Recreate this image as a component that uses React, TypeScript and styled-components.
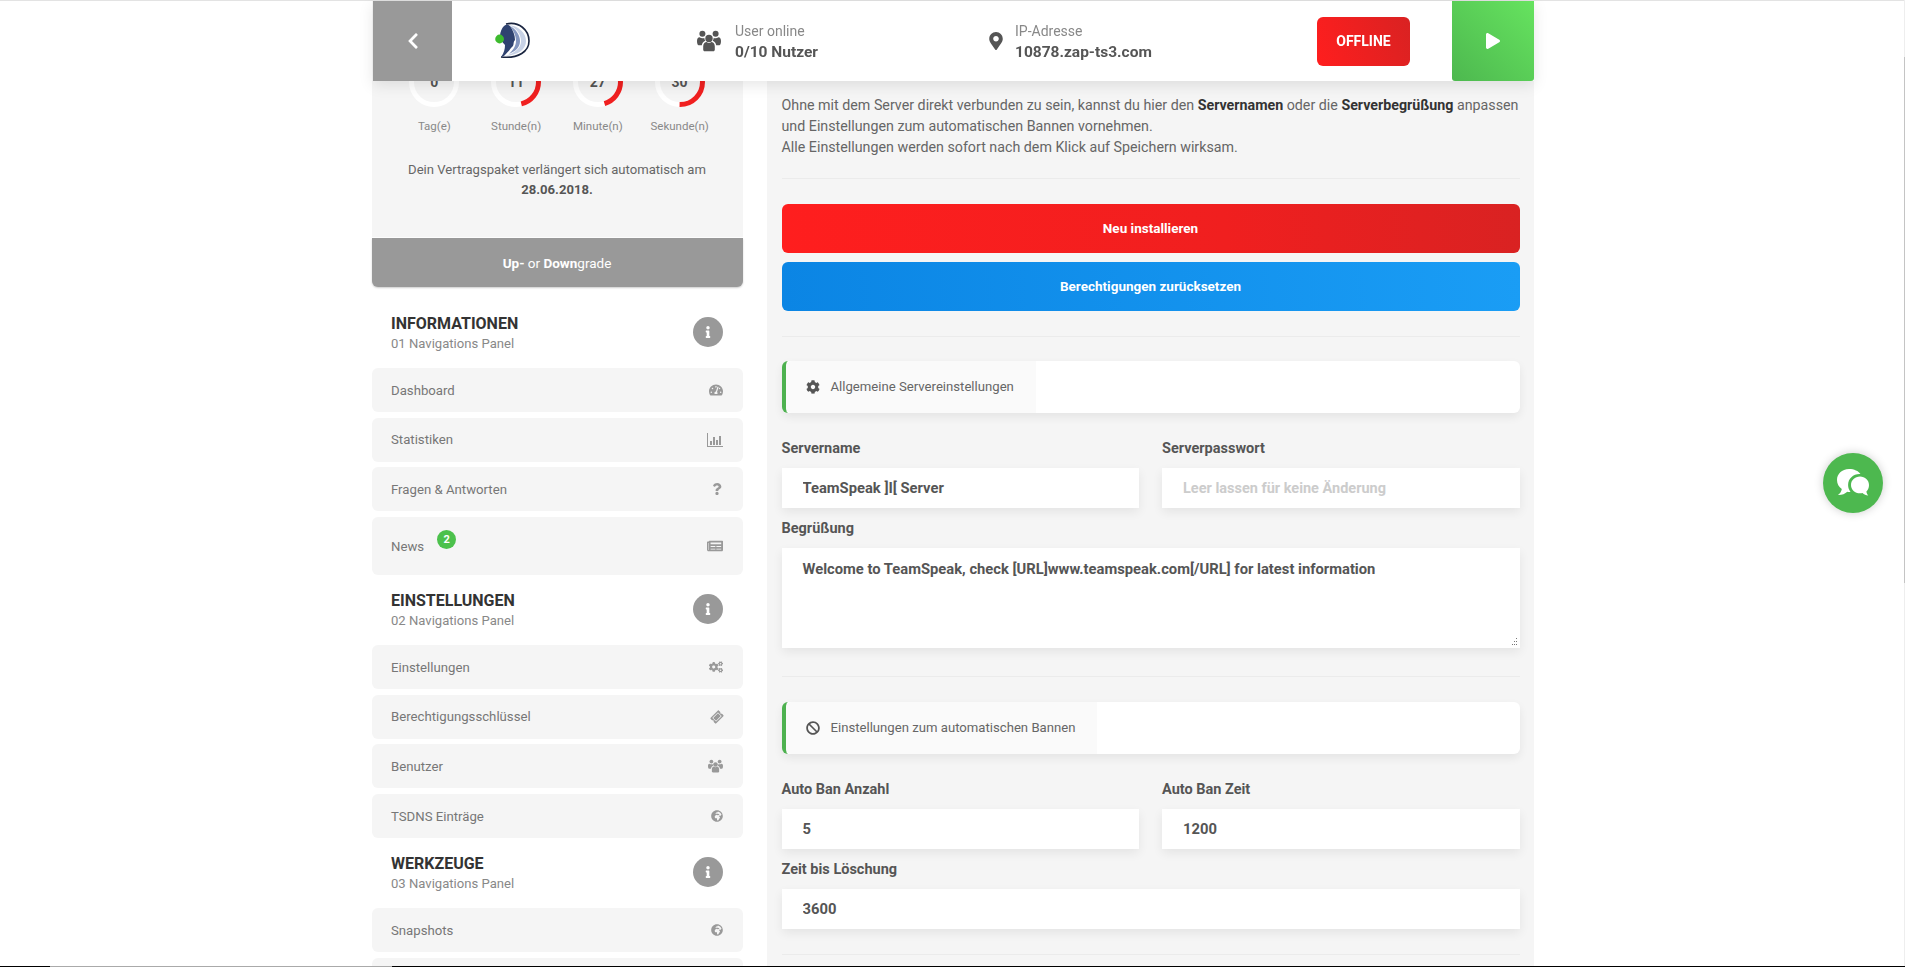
import styled, { createGlobalStyle } from "styled-components"
import type { ReactNode } from "react"
import {
	FaBan,
	FaChevronLeft,
	FaCog,
	FaCogs,
	FaGlobeAfrica,
	FaInfo,
	FaMapMarkerAlt,
	FaNewspaper,
	FaPlay,
	FaQuestion,
	FaTachometerAlt,
	FaTicketAlt,
} from "react-icons/fa"

const FONT = `Roboto, "Noto Sans", sans-serif`

const GlobalStyle = createGlobalStyle`
	html, body {
		margin: 0;
		height: 100%;
		overflow: hidden;
		background: #fff;
	}
	body {
		font-family: ${FONT};
		color: #666;
	}
	* {
		box-sizing: border-box;
	}
`

const s = {
	Page: styled.div`
		display: flex;
		justify-content: center;
		gap: 24px;
		height: 967px;
		overflow: hidden;
	`,

	Header: styled.header`
		position: fixed;
		top: 1px;
		left: 373px;
		width: 1161px;
		height: 80px;
		z-index: 5;
		display: flex;
		align-items: center;
		background: #fff;
		box-shadow: 0 4px 14px rgba(0, 0, 0, 0.1);
	`,
	BackButton: styled.button`
		flex: 0 0 79px;
		height: 100%;
		border: 0;
		padding: 0;
		display: flex;
		align-items: center;
		justify-content: center;
		color: #fff;
		font-size: 18px;
		background: #999;
	`,
	Brand: styled.div`
		flex: 0 0 245px;
		padding-left: 43px;
		display: flex;
		align-items: center;
	`,
	Stat: styled.div<{ $width: number; $gap: number }>`
		flex: 0 0 ${(p) => p.$width}px;
		display: flex;
		align-items: center;
		gap: ${(p) => p.$gap}px;
		> svg {
			color: #555;
			font-size: 18px;
		}
	`,
	StatText: styled.div`
		display: flex;
		flex-direction: column;
		gap: 1px;
	`,
	StatLabel: styled.span`
		font-size: 14px;
		line-height: 20px;
		color: #888;
	`,
	StatValue: styled.span`
		font-size: 15.5px;
		line-height: 20px;
		font-weight: 700;
		color: #555;
	`,
	OfflineButton: styled.button`
		flex: 0 0 93px;
		height: 49px;
		margin-right: 42px;
		border: 0;
		border-radius: 6px;
		font-family: ${FONT};
		font-size: 14px;
		font-weight: 700;
		color: #fff;
		background: linear-gradient(70deg, #ff1e1e, #d92222);
	`,
	PlayButton: styled.button`
		flex: 0 0 82px;
		height: 100%;
		border: 0;
		border-radius: 0 0 3px 3px;
		display: flex;
		align-items: center;
		justify-content: center;
		color: #fff;
		font-size: 16px;
		background: linear-gradient(45deg, #4db84f, #66e35f);
	`,

	Sidebar: styled.aside`
		flex: 0 0 371px;
	`,
	UsageCard: styled.section`
		background: #f5f5f5;
		padding: 57px 22px 37px;
		text-align: center;
	`,
	GaugeRow: styled.div`
		display: grid;
		grid-template-columns: repeat(4, 1fr);
	`,
	Gauge: styled.div`
		display: flex;
		flex-direction: column;
		align-items: center;
		gap: 11px;
	`,
	GaugeDial: styled.div`
		width: 50px;
		height: 50px;
		display: grid;
		place-items: center;
		> * {
			grid-area: 1 / 1;
		}
	`,
	GaugeNumber: styled.span`
		font-size: 14px;
		font-weight: 700;
		color: #555;
	`,
	GaugeLabel: styled.span`
		font-size: 11.5px;
		line-height: 16px;
		color: #888;
	`,
	RenewText: styled.p`
		margin: 26px 0 0;
		font-size: 13.1px;
		line-height: 20px;
		color: #666;
		strong {
			color: #555;
		}
	`,
	UpgradeButton: styled.button`
		display: block;
		width: 100%;
		height: 49px;
		margin-top: 1px;
		border: 0;
		border-radius: 0 0 6px 6px;
		font-family: ${FONT};
		font-size: 13.5px;
		color: #fff;
		background: #999;
		box-shadow: 0 1px 2px rgba(0, 0, 0, 0.2);
	`,

	NavGroup: styled.nav`
		display: flex;
		flex-direction: column;
		gap: 5.6px;
		&:first-of-type {
			margin-top: 11px;
		}
	`,
	NavHead: styled.div`
		height: 70px;
		margin-bottom: -5.6px;
		padding: 2px 20px 0 19.5px;
		display: flex;
		align-items: center;
		justify-content: space-between;
	`,
	NavTitle: styled.h3`
		margin: 0;
		font-size: 16px;
		line-height: 20px;
		font-weight: 700;
		color: #333;
	`,
	NavSub: styled.div`
		font-size: 13.1px;
		line-height: 20px;
		color: #888;
	`,
	InfoDot: styled.span`
		width: 30px;
		height: 30px;
		margin-top: -4px;
		border-radius: 50%;
		display: flex;
		align-items: center;
		justify-content: center;
		color: #fff;
		font-size: 12px;
		background: #999;
	`,
	NavRow: styled.a<{ $tall?: boolean }>`
		height: ${(p) => (p.$tall ? 58.5 : 44)}px;
		padding: 0 20px 0 19.5px;
		display: flex;
		flex-shrink: 0;
		align-items: center;
		justify-content: space-between;
		border-radius: 6px;
		font-size: 13.2px;
		color: #777;
		background: #f5f5f5;
	`,
	NavLabel: styled.span`
		position: relative;
	`,
	Badge: styled.span`
		position: absolute;
		top: -9px;
		left: calc(100% + 13px);
		width: 19px;
		height: 19px;
		border-radius: 50%;
		display: flex;
		align-items: center;
		justify-content: center;
		font-size: 11px;
		font-weight: 700;
		color: #fff;
		background: #4cc14c;
	`,
	NavIcon: styled.span<{ $turn?: boolean }>`
		display: flex;
		font-size: 14px;
		color: #999;
		transform: ${(p) => (p.$turn ? "rotate(-45deg)" : "none")};
	`,

	Panel: styled.main`
		flex: 0 0 767px;
		padding: 95px 14px 0 15px;
		background: #f5f5f5;
	`,
	Intro: styled.p`
		margin: 0;
		font-size: 14.25px;
		line-height: 21px;
		color: #666;
		strong {
			color: #333;
		}
	`,
	Rule: styled.hr<{ $top: number; $bottom?: number }>`
		margin: ${(p) => p.$top}px 0 ${(p) => p.$bottom ?? 25}px;
		height: 1px;
		border: 0;
		background: #ebebeb;
	`,
	WideButton: styled.button<{ $tone: "red" | "blue" }>`
		display: block;
		width: 100%;
		height: 48.5px;
		border: 0;
		border-radius: 6px;
		font-family: ${FONT};
		font-size: 13.5px;
		font-weight: 700;
		color: #fff;
		background: ${(p) =>
			p.$tone === "red"
				? "linear-gradient(85deg, #ff1e1e, #f01f1f 60%, #d92222)"
				: "linear-gradient(85deg, #0b85e4, #1a9df5)"};
		& + & {
			margin-top: 9.5px;
		}
	`,
	SectionBar: styled.div`
		height: 52px;
		display: flex;
		border-left: 4px solid #4db14f;
		border-radius: 6px;
		background: #fff;
		box-shadow: 0 4px 10px rgba(0, 0, 0, 0.07);
	`,
	SectionTag: styled.div`
		display: flex;
		align-items: center;
		gap: 11px;
		padding: 0 22px 0 20px;
		border-radius: 6px 0 0 6px;
		font-size: 13.15px;
		color: #666;
		background: #fafafa;
		svg {
			color: #555;
			font-size: 14px;
		}
	`,
	FieldGrid: styled.div`
		display: grid;
		grid-template-columns: 1fr 1fr;
		column-gap: 23px;
		row-gap: 11px;
		margin-top: 26px;
	`,
	Field: styled.label<{ $wide?: boolean }>`
		display: flex;
		flex-direction: column;
		gap: 9px;
		grid-column: ${(p) => (p.$wide ? "1 / -1" : "auto")};
		position: relative;
	`,
	FieldLabel: styled.span`
		font-size: 14.5px;
		line-height: 20px;
		font-weight: 700;
		color: #555;
	`,
	Input: styled.input`
		width: 100%;
		height: 40px;
		padding: 1px 21px 0;
		border: 0;
		outline: 0;
		font-family: ${FONT};
		font-size: 14.75px;
		font-weight: 700;
		color: #555;
		background: #fff;
		box-shadow: 0 4px 10px rgba(0, 0, 0, 0.07);
		&::placeholder {
			color: #ccc;
			opacity: 1;
			font-size: 14.5px;
		}
	`,
	TextArea: styled.textarea`
		display: block;
		width: 100%;
		height: 100px;
		padding: 11px 21px;
		border: 0;
		outline: 0;
		resize: none;
		font-family: ${FONT};
		font-size: 14.75px;
		line-height: 20px;
		font-weight: 700;
		color: #555;
		background: #fff;
		box-shadow: 0 4px 10px rgba(0, 0, 0, 0.07);
	`,
	Grip: styled.svg`
		position: absolute;
		right: 2px;
		bottom: 2px;
		width: 8px;
		height: 8px;
	`,

	ChatButton: styled.button`
		position: fixed;
		top: 453px;
		left: 1823px;
		width: 60px;
		height: 60px;
		padding: 0;
		border: 0;
		border-radius: 50%;
		display: flex;
		align-items: center;
		justify-content: center;
		background: #4db84f;
		box-shadow: 0 0 10px rgba(0, 0, 0, 0.2);
	`,

	// the browser's thin scrollbars are part of the picture
	TopEdge: styled.div`
		position: fixed;
		top: 0;
		left: 0;
		right: 0;
		height: 1px;
		background: #e3e3e3;
	`,
	ScrollY: styled.div`
		position: fixed;
		top: 0;
		bottom: 0;
		right: 0;
		width: 1px;
		background: #eee;
		&::after {
			content: "";
			position: absolute;
			top: 57px;
			left: 0;
			width: 1px;
			height: 526px;
			background: #c4c4c4;
		}
	`,
	ScrollX: styled.div`
		position: fixed;
		left: 0;
		right: 0;
		bottom: 0;
		height: 1px;
		z-index: 6;
		background: #000;
		&::after {
			content: "";
			position: absolute;
			top: 0;
			left: 50px;
			width: 342px;
			height: 1px;
			background: #aaa;
		}
	`,
}

const gauges = [
	{ value: 0, max: 24, label: "Tag(e)" },
	{ value: 11, max: 24, label: "Stunde(n)" },
	{ value: 27, max: 60, label: "Minute(n)" },
	{ value: 30, max: 60, label: "Sekunde(n)" },
]

type NavItem = { label: string; icon?: ReactNode; badge?: number; turn?: boolean }

const BarChartIcon = () => (
	<svg width="16" height="14" viewBox="0 0 16 14" fill="currentColor">
		<path d="M0 0h1v13h15v1H0z" />
		<path d="M3 8h2v4H3zM6 4h2v8H6zM9 7h2v5H9zM12 3h2v9h-2z" />
	</svg>
)

// three heads, the middle one lower and in front
const UsersIcon = ({ width, height }: { width: number; height: number }) => (
	<svg width={width} height={height} viewBox="0 0 24 21" fill="currentColor">
		<circle cx="12" cy="8" r="3.7" />
		<path d="M6.200 19.300v-3.600c0-2.600 1.800-4.200 3.600-4.200.6.600 1.300.9 2.200.9s1.600-.3 2.200-.9c1.800 0 3.600 1.600 3.600 4.200v3.600c0 .9-.7 1.500-1.500 1.500H7.700c-.8 0-1.500-.6-1.500-1.500z" />
		<circle cx="5.400" cy="3.300" r="3" />
		<circle cx="18.600" cy="3.300" r="3" />
		<path d="M0 10.500C0 8.200 1 6.800 2.600 6.800c.8.600 1.800 1 2.900 1 .7 0 1.300-.1 1.900-.4-.1.700.2 2 .9 2.800-1.900.7-3.200 2.300-3.500 4.600H1.700C.6 14.800 0 13 0 10.500z" />
		<path d="M24 10.500c0-2.300-1-3.700-2.600-3.700-.8.600-1.800 1-2.900 1-.7 0-1.300-.1-1.900-.4.100.7-.2 2-.9 2.800 1.900.7 3.200 2.300 3.500 4.600h3.100c1.100 0 1.700-1.800 1.700-4.300z" />
	</svg>
)

const navGroups: { title: string; sub: string; items: NavItem[] }[] = [
	{
		title: "INFORMATIONEN",
		sub: "01 Navigations Panel",
		items: [
			{ label: "Dashboard", icon: <FaTachometerAlt /> },
			{ label: "Statistiken", icon: <BarChartIcon /> },
			{ label: "Fragen & Antworten", icon: <FaQuestion size={12} /> },
			{ label: "News", icon: <FaNewspaper size={16} />, badge: 2 },
		],
	},
	{
		title: "EINSTELLUNGEN",
		sub: "02 Navigations Panel",
		items: [
			{ label: "Einstellungen", icon: <FaCogs /> },
			{ label: "Berechtigungsschlüssel", icon: <FaTicketAlt size={12} />, turn: true },
			{ label: "Benutzer", icon: <UsersIcon width={15} height={14} /> },
			{ label: "TSDNS Einträge", icon: <FaGlobeAfrica size={12} /> },
		],
	},
	{
		title: "WERKZEUGE",
		sub: "03 Navigations Panel",
		items: [
			{ label: "Snapshots", icon: <FaGlobeAfrica size={12} /> },
			{ label: "" }, // only the top of this row is on screen
		],
	},
]

function GaugeRing({ value, max }: { value: number; max: number }) {
	const radius = 22.5
	const length = 2 * Math.PI * radius
	return (
		<svg width="50" height="50" viewBox="0 0 50 50">
			<circle cx="25" cy="25" r={radius} fill="none" stroke="#fff" strokeWidth="5" />
			<circle
				cx="25"
				cy="25"
				r={radius}
				fill="none"
				stroke="#f02020"
				strokeWidth="5"
				strokeDasharray={`${(value / max) * length} ${length}`}
				transform="rotate(-90 25 25)"
			/>
		</svg>
	)
}

function TeamSpeakLogo() {
	return (
		<svg width="36" height="38" viewBox="0 0 36 38">
			<path d="M11 2C24-1 34 8 34 19c0 10-10 18-28 16" fill="none" stroke="#1a2540" strokeWidth="1.600" />
			<path d="M14 3c10 1 17 8 17 16s-7 14-21 15c10-3 16-8 16-15S21 6 14 3z" fill="#c8d2e6" />
			<path d="M15 4c6 3 10 9 10 15s-4 10-11 13c4-4 7-8 7-13 0-6-3-11-6-15z" fill="#8496bf" />
			<path d="M9 4c2-2 4-2 6 0 3 4 5 9 5 14-2 2-1 4-2 6-3 3-4 5-8 9-1 1-3 2-4 2 3-4 4-8 4-12-3-3-5-6-5-9 0-4 2-8 4-10z" fill="#2f4270" />
			<circle cx="4.600" cy="17" r="4.400" fill="#3dbb2e" />
		</svg>
	)
}

function ChatIcon() {
	return (
		<svg width="36" height="30" viewBox="0 0 36 30" fill="#fff">
			<path d="M14 1C6.800 1 2 6 2 12c0 3.800 1.900 6.900 4.800 9C6.400 23.500 5 25.700 3 27c3.500.2 7-1 9.300-3.200.6.100 1.200.2 1.700.2.500 0 1-.100 1.500-.100-1.500-2-2.400-4.300-2.400-6.900C13.100 10.700 18.100 6 24.500 6c.4 0 .7 0 1 .1C23.500 3 19.200 1 14 1z" />
			<path d="M25 8.500c-5 0-9 3.700-9 8.400 0 4.600 4 8.300 9 8.300.9 0 1.700-.1 2.500-.3 1.500 1.400 3.500 2.300 5.800 2.500-1-1-1.700-2.400-1.900-4 1.600-1.500 2.600-3.600 2.600-6.500 0-4.700-4-8.400-9-8.400z" />
		</svg>
	)
}

export default function App() {
	return (
		<>
			<GlobalStyle />
			<s.TopEdge />
			<s.Header>
				<s.BackButton><FaChevronLeft /></s.BackButton>
				<s.Brand><TeamSpeakLogo /></s.Brand>
				<s.Stat $width={290} $gap={14}>
					<UsersIcon width={24} height={22} />
					<s.StatText>
						<s.StatLabel>User online</s.StatLabel>
						<s.StatValue>0/10 Nutzer</s.StatValue>
					</s.StatText>
				</s.Stat>
				<s.Stat $width={330} $gap={10}>
					<FaMapMarkerAlt />
					<s.StatText>
						<s.StatLabel>IP-Adresse</s.StatLabel>
						<s.StatValue>10878.zap-ts3.com</s.StatValue>
					</s.StatText>
				</s.Stat>
				<s.OfflineButton>OFFLINE</s.OfflineButton>
				<s.PlayButton><FaPlay /></s.PlayButton>
			</s.Header>

			<s.Page>
				<s.Sidebar>
					<s.UsageCard>
						<s.GaugeRow>
							{gauges.map((g) => (
								<s.Gauge key={g.label}>
									<s.GaugeDial>
										<GaugeRing value={g.value} max={g.max} />
										<s.GaugeNumber>{g.value}</s.GaugeNumber>
									</s.GaugeDial>
									<s.GaugeLabel>{g.label}</s.GaugeLabel>
								</s.Gauge>
							))}
						</s.GaugeRow>
						<s.RenewText>
							Dein Vertragspaket verlängert sich automatisch am
							<br />
							<strong>28.06.2018.</strong>
						</s.RenewText>
					</s.UsageCard>
					<s.UpgradeButton>
						<strong>Up-</strong> or <strong>Down</strong>grade
					</s.UpgradeButton>

					{navGroups.map((group) => (
						<s.NavGroup key={group.title}>
							<s.NavHead>
								<div>
									<s.NavTitle>{group.title}</s.NavTitle>
									<s.NavSub>{group.sub}</s.NavSub>
								</div>
								<s.InfoDot><FaInfo /></s.InfoDot>
							</s.NavHead>
							{group.items.map((item) => (
								<s.NavRow key={item.label} $tall={item.badge !== undefined}>
									<s.NavLabel>
										{item.label}
										{item.badge !== undefined && <s.Badge>{item.badge}</s.Badge>}
									</s.NavLabel>
									<s.NavIcon $turn={item.turn}>{item.icon}</s.NavIcon>
								</s.NavRow>
							))}
						</s.NavGroup>
					))}
				</s.Sidebar>

				<s.Panel>
					<s.Intro>
						Ohne mit dem Server direkt verbunden zu sein, kannst du hier den <strong>Servernamen</strong> oder die <strong>Serverbegrüßung</strong> anpassen
						<br />
						und Einstellungen zum automatischen Bannen vornehmen.
						<br />
						Alle Einstellungen werden sofort nach dem Klick auf Speichern wirksam.
					</s.Intro>
					<s.Rule $top={20} />
					<s.WideButton $tone="red">Neu installieren</s.WideButton>
					<s.WideButton $tone="blue">Berechtigungen zurücksetzen</s.WideButton>
					<s.Rule $top={25} $bottom={24} />

					<s.SectionBar>
						<s.SectionTag><FaCog />Allgemeine Servereinstellungen</s.SectionTag>
					</s.SectionBar>
					<s.FieldGrid>
						<s.Field>
							<s.FieldLabel>Servername</s.FieldLabel>
							<s.Input defaultValue="TeamSpeak ]I[ Server" />
						</s.Field>
						<s.Field>
							<s.FieldLabel>Serverpasswort</s.FieldLabel>
							<s.Input placeholder="Leer lassen für keine Änderung" />
						</s.Field>
						<s.Field $wide>
							<s.FieldLabel>Begrüßung</s.FieldLabel>
							<s.TextArea defaultValue="Welcome to TeamSpeak, check [URL]www.teamspeak.com[/URL] for latest information" />
							<s.Grip viewBox="0 0 8 8" fill="#777">
								<path d="M6 0h1v1H6zM4 3h1v1H4zM6 3h1v1H6zM2 6h1v1H2zM4 6h1v1H4zM6 6h1v1H6z" />
							</s.Grip>
						</s.Field>
					</s.FieldGrid>
					<s.Rule $top={28} />

					<s.SectionBar>
						<s.SectionTag><FaBan />Einstellungen zum automatischen Bannen</s.SectionTag>
					</s.SectionBar>
					<s.FieldGrid>
						<s.Field>
							<s.FieldLabel>Auto Ban Anzahl</s.FieldLabel>
							<s.Input defaultValue="5" />
						</s.Field>
						<s.Field>
							<s.FieldLabel>Auto Ban Zeit</s.FieldLabel>
							<s.Input defaultValue="1200" />
						</s.Field>
						<s.Field $wide>
							<s.FieldLabel>Zeit bis Löschung</s.FieldLabel>
							<s.Input defaultValue="3600" />
						</s.Field>
					</s.FieldGrid>
					<s.Rule $top={25} />
				</s.Panel>
			</s.Page>

			<s.ChatButton><ChatIcon /></s.ChatButton>
			<s.ScrollY />
			<s.ScrollX />
		</>
	)
}
